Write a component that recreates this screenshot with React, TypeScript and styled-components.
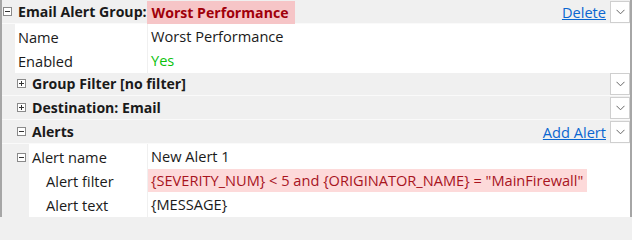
import React from 'react';
import styled, { createGlobalStyle } from 'styled-components';

const GlobalStyle = createGlobalStyle`
  html, body {
    margin: 0;
    padding: 0;
    background: #f0f0f0;
  }
  body {
    font-family: "Open Sans", "Noto Sans", sans-serif;
    font-size: 14.6px;
    color: #1a1a1a;
  }
`;

const Grid = styled.div`
  width: 632px;
  height: 217px;
  box-sizing: border-box;
  background: #f0f0f0;
  border-left: 2px solid #a6a6a6;
  border-right: 2px solid #a6a6a6;
  overflow: hidden;
`;

const GroupRow = styled.div<{ $indent: number }>`
  display: flex;
  align-items: center;
  height: 23px;
  border-bottom: 1px solid #fafafa;
  padding-left: ${({ $indent }) => $indent * 14 + 1}px;
  font-weight: 700;
  font-size: 14.1px;
`;

const Expander = styled.span`
  width: 9px;
  height: 9px;
  box-sizing: border-box;
  border: 1px solid #8a8a8a;
  background: #fff;
  position: relative;
  flex: none;
  margin-right: 6px;

  &::before {
    content: '';
    position: absolute;
    left: 1px;
    right: 1px;
    top: 3px;
    height: 1px;
    background: #333;
  }
`;

const PlusExpander = styled(Expander)`
  &::after {
    content: '';
    position: absolute;
    top: 1px;
    bottom: 1px;
    left: 3px;
    width: 1px;
    background: #333;
  }
`;

const GroupTitle = styled.span`
  flex: 1;
  display: flex;
  align-items: center;
  white-space: nowrap;
`;

const Highlight = styled.span`
  background: #f6c5c7;
  color: #a0000a;
  padding: 0 7px 0 5px;
  height: 24px;
  line-height: 24px;
  margin-top: 2px;
  margin-left: 0;
`;

const LinkButton = styled.a`
  color: #0a66d0;
  text-decoration: underline;
  font-weight: 400;
  font-size: 14.6px;
  margin-right: 4px;
  cursor: pointer;
`;

const DropButton = styled.button`
  width: 20px;
  height: 22px;
  box-sizing: border-box;
  border: 1px solid #cfcfcf;
  background: #fff;
  padding: 0;
  display: flex;
  align-items: center;
  justify-content: center;
  flex: none;
`;

const PropRow = styled.div<{ $gutter: number }>`
  display: grid;
  grid-template-columns: ${({ $gutter }) => `${$gutter}px ${146 - $gutter}px 1fr`};
  height: 24px;
`;

const Gutter = styled.div`
  display: flex;
  align-items: center;
  padding-left: 15px;
`;

const LabelCell = styled.div<{ $pad: number }>`
  box-sizing: border-box;
  background: #fff;
  border-bottom: 1px solid #f0f0f0;
  border-right: 1px solid #f0f0f0;
  padding-left: ${({ $pad }) => $pad}px;
  display: flex;
  align-items: center;
  white-space: nowrap;
`;

const ValueCell = styled.div`
  box-sizing: border-box;
  background: #fff;
  border-bottom: 1px solid #f0f0f0;
  display: flex;
  align-items: center;
  white-space: nowrap;
`;

const ValueText = styled.span<{ $tone?: 'green' | 'error' }>`
  padding-left: 3px;
  padding-right: 4px;
  height: 24px;
  line-height: 23px;
  margin-top: 1px;
  color: ${({ $tone }) =>
    $tone === 'green' ? '#0cc20c' : $tone === 'error' ? '#a8141e' : '#1a1a1a'};
  background: ${({ $tone }) => ($tone === 'error' ? '#fddada' : 'transparent')};
`;

const Chevron = () => (
  <svg width="9" height="6" viewBox="0 0 9 6">
    <path d="M0.5 0.8 L4.5 4.8 L8.5 0.8" fill="none" stroke="#666" strokeWidth="1" />
  </svg>
);

export default function App() {
  return (
    <>
      <GlobalStyle />
      <Grid>
        <GroupRow $indent={0}>
          <Expander />
          <GroupTitle>
            Email Alert Group:<Highlight>Worst Performance</Highlight>
          </GroupTitle>
          <LinkButton>Delete</LinkButton>
          <DropButton><Chevron /></DropButton>
        </GroupRow>

        <PropRow $gutter={13}>
          <Gutter />
          <LabelCell $pad={3}>Name</LabelCell>
          <ValueCell><ValueText>Worst Performance</ValueText></ValueCell>
        </PropRow>
        <PropRow $gutter={13}>
          <Gutter />
          <LabelCell $pad={3}>Enabled</LabelCell>
          <ValueCell><ValueText $tone="green">Yes</ValueText></ValueCell>
        </PropRow>

        <GroupRow $indent={1}>
          <PlusExpander />
          <GroupTitle>Group Filter [no filter]</GroupTitle>
          <DropButton><Chevron /></DropButton>
        </GroupRow>
        <GroupRow $indent={1}>
          <PlusExpander />
          <GroupTitle>Destination: Email</GroupTitle>
          <DropButton><Chevron /></DropButton>
        </GroupRow>
        <GroupRow $indent={1}>
          <Expander />
          <GroupTitle>Alerts</GroupTitle>
          <LinkButton>Add Alert</LinkButton>
          <DropButton><Chevron /></DropButton>
        </GroupRow>

        <PropRow $gutter={27}>
          <Gutter><Expander /></Gutter>
          <LabelCell $pad={3}>Alert name</LabelCell>
          <ValueCell><ValueText>New Alert 1</ValueText></ValueCell>
        </PropRow>
        <PropRow $gutter={27}>
          <Gutter />
          <LabelCell $pad={17}>Alert filter</LabelCell>
          <ValueCell>
            <ValueText $tone="error">
              {'{SEVERITY_NUM} < 5 and {ORIGINATOR_NAME} = "MainFirewall"'}
            </ValueText>
          </ValueCell>
        </PropRow>
        <PropRow $gutter={27}>
          <Gutter />
          <LabelCell $pad={17}>Alert text</LabelCell>
          <ValueCell><ValueText>{'{MESSAGE}'}</ValueText></ValueCell>
        </PropRow>
      </Grid>
    </>
  );
}
